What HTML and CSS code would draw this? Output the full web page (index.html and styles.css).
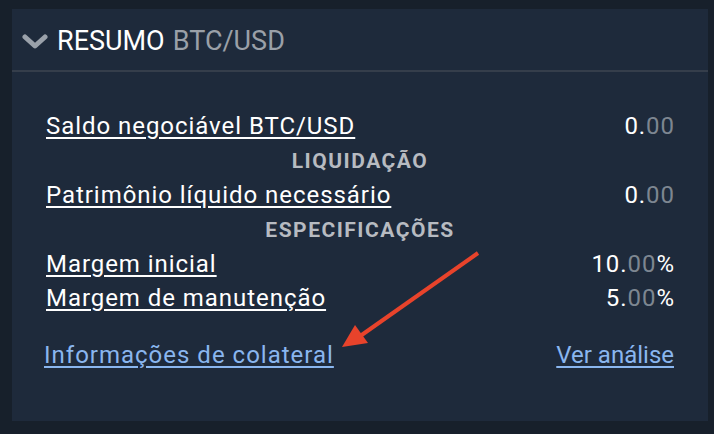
FILE: index.html
```html
<!DOCTYPE html>
<html lang="pt">
<head>
    <meta charset="UTF-8">
    <title>Resumo BTC/USD</title>
    <link rel="stylesheet" href="styles.css">
</head>
<body>
    <div class="panel">
        <div class="panel-head">
            <svg class="chevron" width="26" height="18" viewBox="0 0 26 18">
                <polyline points="3,4 13,13 23,4" fill="none" stroke="#9aa1aa" stroke-width="5" stroke-linecap="round" stroke-linejoin="round"/>
            </svg>
            <span class="title">RESUMO</span>
            <span class="pair">BTC/USD</span>
        </div>

        <div class="panel-body">
            <div class="row">
                <a href="javascript:void(0)" class="label">Saldo negociável BTC/USD</a>
                <span class="value">0.<i>00</i></span>
            </div>
            <div class="section">LIQUIDAÇÃO</div>
            <div class="row">
                <a href="javascript:void(0)" class="label">Patrimônio líquido necessário</a>
                <span class="value">0.<i>00</i></span>
            </div>
            <div class="section">ESPECIFICAÇÕES</div>
            <div class="row">
                <a href="javascript:void(0)" class="label">Margem inicial</a>
                <span class="value">10.<i>00</i>%</span>
            </div>
            <div class="row">
                <a href="javascript:void(0)" class="label">Margem de manutenção</a>
                <span class="value">5.<i>00</i>%</span>
            </div>

            <div class="links">
                <a href="javascript:void(0)" class="link wide">Informações de colateral</a>
                <a href="javascript:void(0)" class="link">Ver análise</a>
            </div>
        </div>

        <!-- red annotation arrow -->
        <svg class="pointer" width="160" height="110" viewBox="0 0 160 110">
            <line x1="146" y1="6" x2="24" y2="92" stroke="#e8432b" stroke-width="4"/>
            <polygon points="10,100 23,78 36,96" fill="#e8432b"/>
        </svg>
    </div>
</body>
</html>
```

FILE: styles.css
```css
* {
    margin: 0;
    padding: 0;
    box-sizing: border-box;
}

body {
    padding: 9px 6px 13px 12px;
    background-color: #17202b;
    font-family: Roboto, "Liberation Sans", sans-serif;
}

.panel {
    position: relative;
    height: 412px;
    background-color: #1e2a3b;
}

.panel-head {
    display: flex;
    align-items: center;
    height: 63px;
    padding-left: 10px;
    padding-top: 2px;
    border-bottom: 2px solid #353e4b;
    font-size: 27px;
}

.chevron {
    margin-right: 9px;
    margin-top: 2px;
}

.title {
    color: #fff;
    margin-right: 8px;
}

.pair {
    color: #9aa0a8;
}

.panel-body {
    padding: 37px 34px 0 34px;
    font-size: 24px;
    letter-spacing: 0.95px;
}

.row {
    display: flex;
    justify-content: space-between;
    align-items: center;
    height: 34px;
}

.label {
    color: #fff;
    text-decoration: underline;
    text-underline-offset: 3px;
}

.value {
    color: #fff;
    margin-right: -1px;
}

.value i {
    font-style: normal;
    color: #7d8691;
}

.section {
    height: 35px;
    line-height: 36px;
    text-align: center;
    font-size: 21px;
    font-weight: bold;
    letter-spacing: 1.5px;
    color: #b7bbc1;
}

.links {
    display: flex;
    justify-content: space-between;
    align-items: center;
    margin-top: 23px;
    height: 34px;
}

.link {
    color: #8ab6ef;
    letter-spacing: 0;
    text-decoration: underline;
    text-underline-offset: 3px;
}

.link.wide {
    margin-left: -2px;
    letter-spacing: 1px;
}

.pointer {
    position: absolute;
    left: 320px;
    top: 238px;
}
```
